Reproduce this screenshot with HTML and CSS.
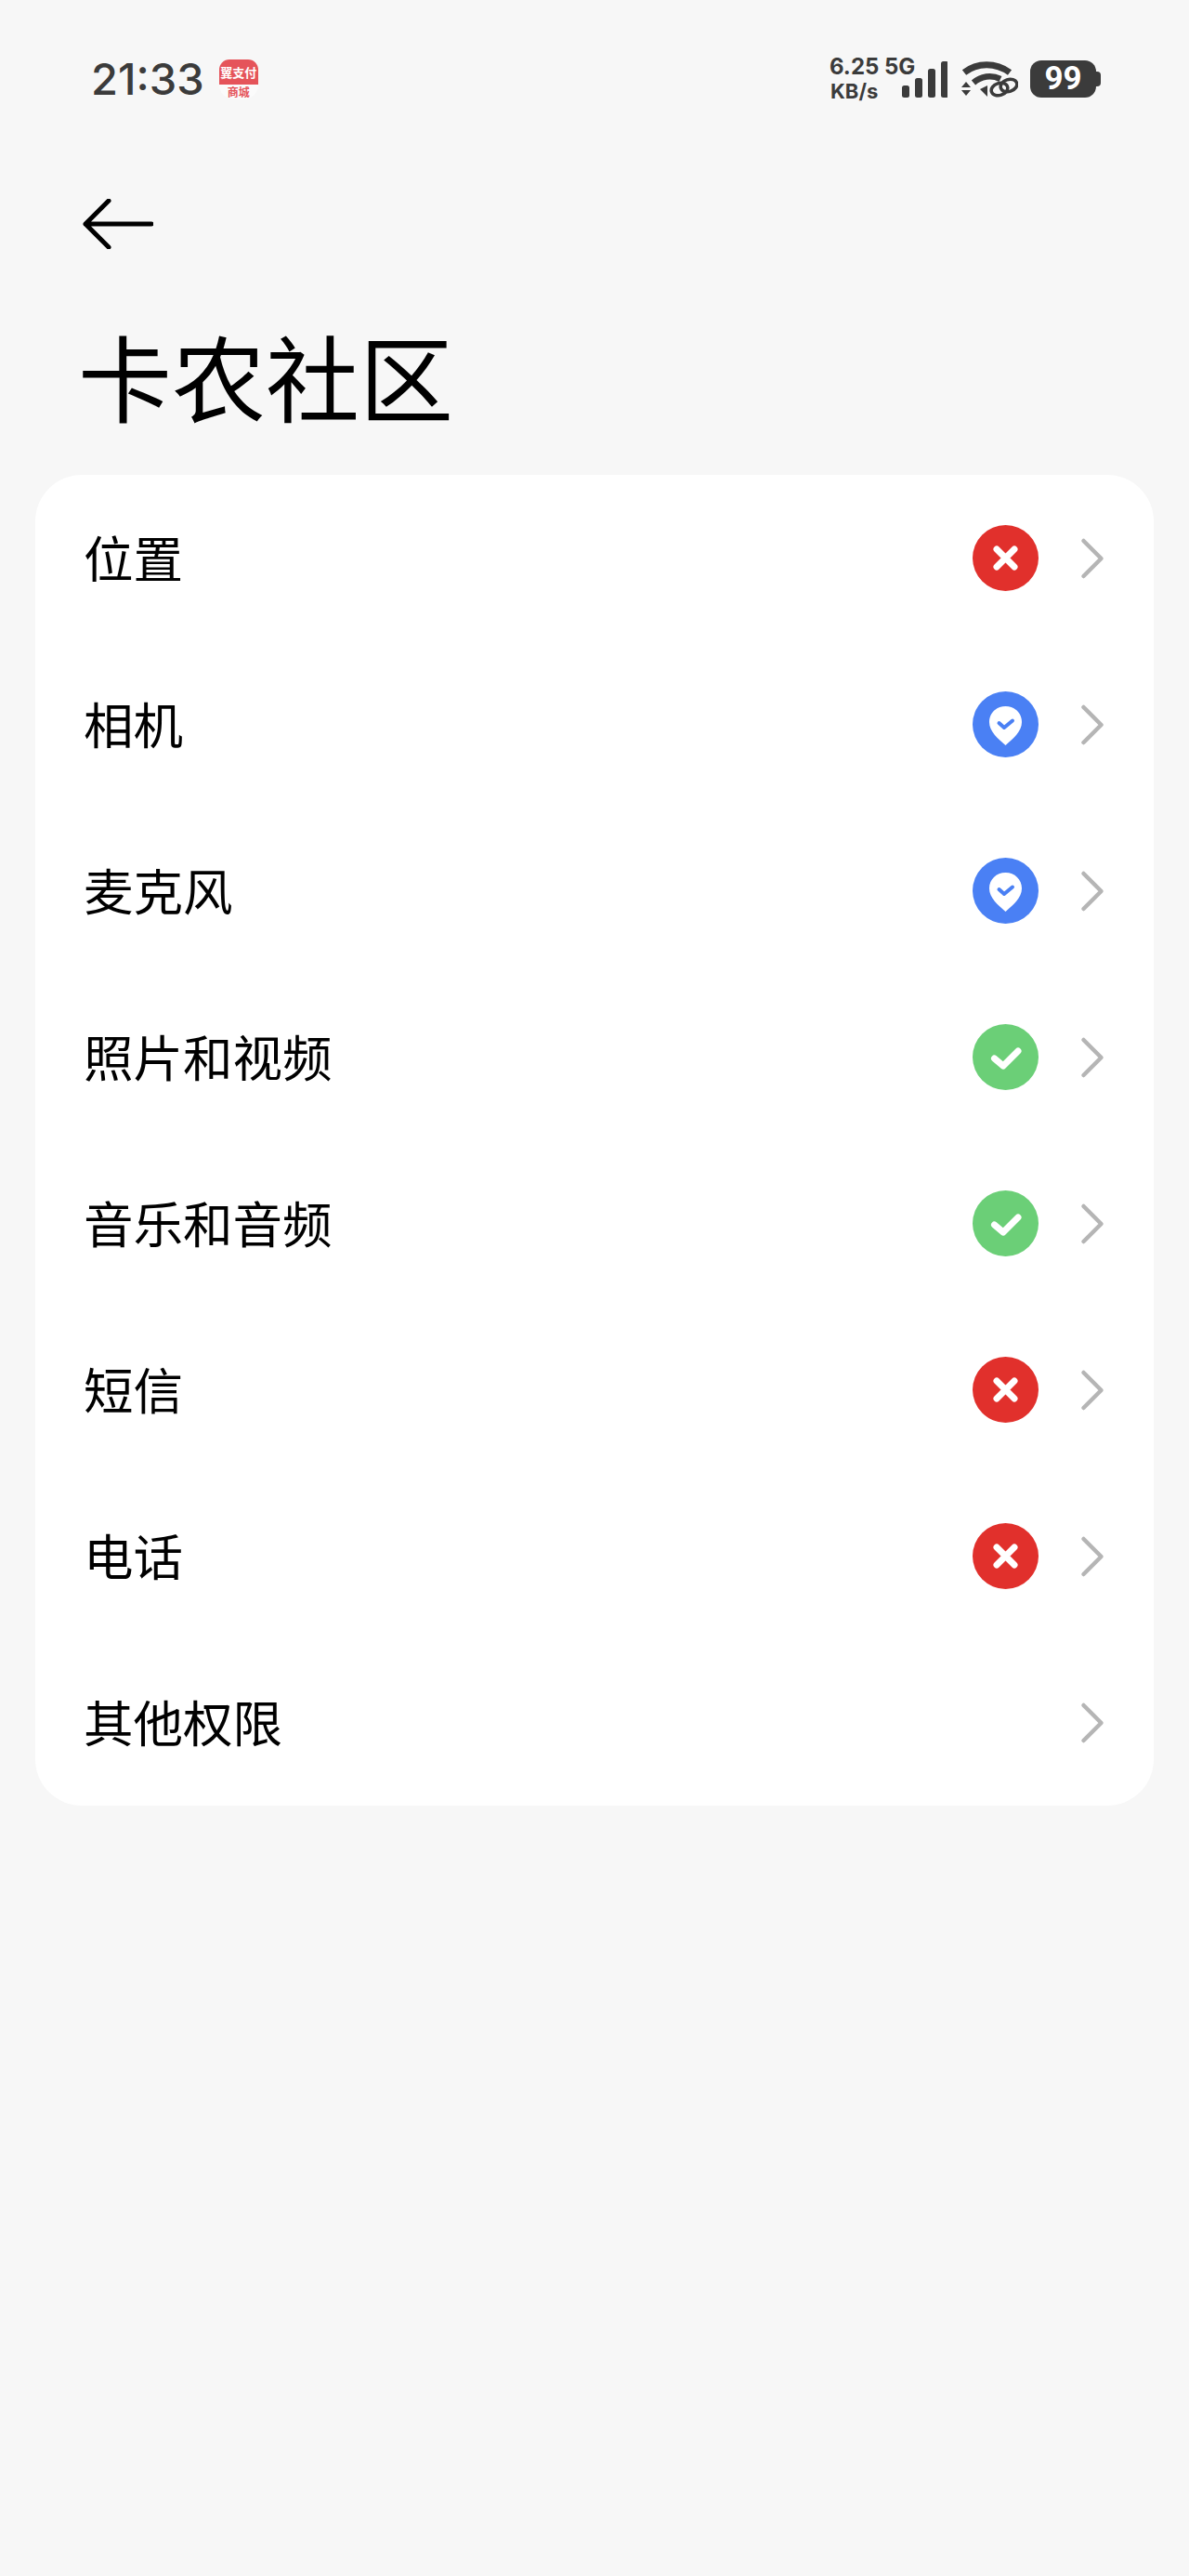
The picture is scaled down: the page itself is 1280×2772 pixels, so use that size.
FILE: index.html
```html
<!DOCTYPE html>
<html lang="zh-CN">
<head>
<meta charset="utf-8">
<title>卡农社区</title>
<link rel="stylesheet" href="styles.css">
</head>
<body>
<svg class="defs" width="0" height="0" aria-hidden="true">
  <symbol id="deny" viewBox="0 0 71 71">
    <circle cx="35.5" cy="35.500" r="35.5" fill="#e1302c"/>
    <path d="M26 26 45 45M45 26 26 45" stroke="#fff" stroke-width="7" stroke-linecap="round" fill="none"/>
  </symbol>
  <symbol id="ask" viewBox="0 0 71 71">
    <circle cx="35.5" cy="35.500" r="35.5" fill="#4a80f4"/>
    <path d="M35.500 16C25.500 16 18 23.500 18 33c0 10 9.500 18 17.500 25C43.500 51 53 43 53 33 53 23.500 45.500 16 35.500 16Z" fill="#fff"/>
    <path d="M28.500 34l5.500 5 9-7.500" stroke="#4a80f4" stroke-width="4" stroke-linecap="round" stroke-linejoin="round" fill="none"/>
  </symbol>
  <symbol id="allow" viewBox="0 0 71 71">
    <circle cx="35.5" cy="35.500" r="35.5" fill="#6bcf77"/>
    <path d="M23.500 37l9.500 8L49 29" stroke="#fff" stroke-width="7" stroke-linecap="round" stroke-linejoin="round" fill="none"/>
  </symbol>
  <symbol id="chev" viewBox="0 0 28 48">
    <path d="M4.500 5 23.500 24 4.500 43" stroke="#b5b5b5" stroke-width="4.500" stroke-linecap="round" stroke-linejoin="round" fill="none"/>
  </symbol>
</svg>

<header class="status">
  <div class="status-left">
    <span class="clock">21:33</span>
    <div class="app-badge">
      <span class="app-top">翼支付</span>
      <span class="app-bottom">商城</span>
    </div>
  </div>
  <div class="status-right">
    <div class="net">
      <span>6.25 5G</span>
      <span class="net-unit">KB/s</span>
    </div>
    <svg class="signal" width="49" height="39" viewBox="0 0 49 39">
      <rect x="0" y="26" width="8" height="13" rx="2.500"/>
      <rect x="14" y="18" width="8" height="21" rx="2.500"/>
      <rect x="28" y="8" width="8" height="31" rx="2.500"/>
      <rect x="42" y="0" width="8" height="39" rx="2.500"/>
    </svg>
    <svg class="wifi" width="62" height="40" viewBox="0 0 62 40">
      <path d="M4 13C18 2 38 2 53 13" fill="none" stroke="#3b3b3b" stroke-width="7"/>
      <path d="M14 24C22 17 33 15 43 20" fill="none" stroke="#3b3b3b" stroke-width="6.500"/>
      <path d="M21 31 29 27 29 39Z" fill="#3b3b3b"/>
      <path d="M1 29 6 23 11 29ZM1 32 11 32 6 38Z" fill="#3b3b3b"/>
      <ellipse cx="42" cy="31" rx="9" ry="6.500" transform="rotate(-18 42 31)" fill="none" stroke="#3b3b3b" stroke-width="3.500"/>
      <ellipse cx="52" cy="27" rx="9" ry="6.500" transform="rotate(-18 52 27)" fill="none" stroke="#3b3b3b" stroke-width="3.500"/>
    </svg>
    <div class="battery">
      <div class="battery-body">99</div>
      <div class="battery-nub"></div>
    </div>
  </div>
</header>

<button class="back" aria-label="返回">
  <svg width="76" height="54" viewBox="0 0 76 54">
    <path d="M28 2 3 27l25 25M3 27h71" fill="none" stroke="#000" stroke-width="5" stroke-linecap="round" stroke-linejoin="round"/>
  </svg>
</button>

<h1 class="title">卡农社区</h1>

<main class="card">
  <div class="row"><span class="label">位置</span><svg class="state"><use href="#deny"/></svg><svg class="chev"><use href="#chev"/></svg></div>
  <div class="row"><span class="label">相机</span><svg class="state"><use href="#ask"/></svg><svg class="chev"><use href="#chev"/></svg></div>
  <div class="row"><span class="label">麦克风</span><svg class="state"><use href="#ask"/></svg><svg class="chev"><use href="#chev"/></svg></div>
  <div class="row"><span class="label">照片和视频</span><svg class="state"><use href="#allow"/></svg><svg class="chev"><use href="#chev"/></svg></div>
  <div class="row"><span class="label">音乐和音频</span><svg class="state"><use href="#allow"/></svg><svg class="chev"><use href="#chev"/></svg></div>
  <div class="row"><span class="label">短信</span><svg class="state"><use href="#deny"/></svg><svg class="chev"><use href="#chev"/></svg></div>
  <div class="row"><span class="label">电话</span><svg class="state"><use href="#deny"/></svg><svg class="chev"><use href="#chev"/></svg></div>
  <div class="row"><span class="label">其他权限</span><svg class="chev"><use href="#chev"/></svg></div>
</main>
</body>
</html>
```

FILE: styles.css
```css
* { box-sizing: border-box; }
html, body { margin: 0; padding: 0; }
body {
  width: 1280px;
  min-height: 2772px;
  background: #f7f7f7;
  color: #000;
  font-family: "Noto Sans CJK SC", "Noto Sans", sans-serif;
}
.defs { position: absolute; }

.status {
  display: flex;
  justify-content: space-between;
  align-items: center;
  height: 44px;
  margin-top: 63px;
  padding: 0 95px 0 98px;
  color: #3b3b3b;
  font-family: Inter, "Noto Sans", sans-serif;
}
.status-left, .status-right { display: flex; align-items: center; }
.clock { font-size: 47px; font-weight: 500; line-height: 44px; letter-spacing: 0; }
.app-badge {
  width: 42px;
  height: 43px;
  margin-left: 16px;
  border-radius: 11px 11px 16px 16px;
  background: #fbfbfb;
  overflow: hidden;
  display: flex;
  flex-direction: column;
  align-items: center;
  font-family: "Noto Sans CJK SC", sans-serif;
  font-weight: 700;
}
.app-top {
  width: 100%;
  height: 27px;
  background: #e5545a;
  color: #fff;
  font-size: 13px;
  line-height: 27px;
  text-align: center;
  white-space: nowrap;
}
.app-bottom { color: #e5545a; font-size: 12px; line-height: 16px; }

.net {
  display: flex;
  flex-direction: column;
  font-size: 24px;
  font-weight: 700;
  line-height: 27px;
  white-space: nowrap;
  width: 78px;
}
.net-unit { padding-left: 1px; font-size: 22px; }
.signal { fill: #3b3b3b; }
.wifi { margin-left: 14px; }
.battery { display: flex; align-items: center; margin-left: 13px; }
.battery-body {
  width: 71px;
  height: 40px;
  border-radius: 12px;
  background: #3b3b3b;
  color: #fff;
  font-family: Roboto, sans-serif;
  font-size: 35px;
  font-weight: 700;
  line-height: 40px;
  text-align: center;
}
.battery-nub { width: 5px; height: 16px; border-radius: 0 4px 4px 0; background: #3b3b3b; }

.back {
  display: block;
  margin: 107px 0 0 89px;
  padding: 0;
  border: 0;
  background: none;
}
.back svg { display: block; }

.title {
  margin: 73px 0 0 84px;
  font-size: 101px;
  font-weight: 400;
  line-height: 124px;
}

.card {
  margin: 46px 38px 0;
  border-radius: 50px;
  background: #fff;
}
.row {
  display: flex;
  align-items: center;
  height: 179px;
  padding: 0 52px 0 52px;
}
.label { flex: 1; font-size: 53.500px; line-height: 1; margin-bottom: 4px; }
.state { width: 71px; height: 71px; }
.chev { width: 28px; height: 48px; margin-left: 44px; }
```
